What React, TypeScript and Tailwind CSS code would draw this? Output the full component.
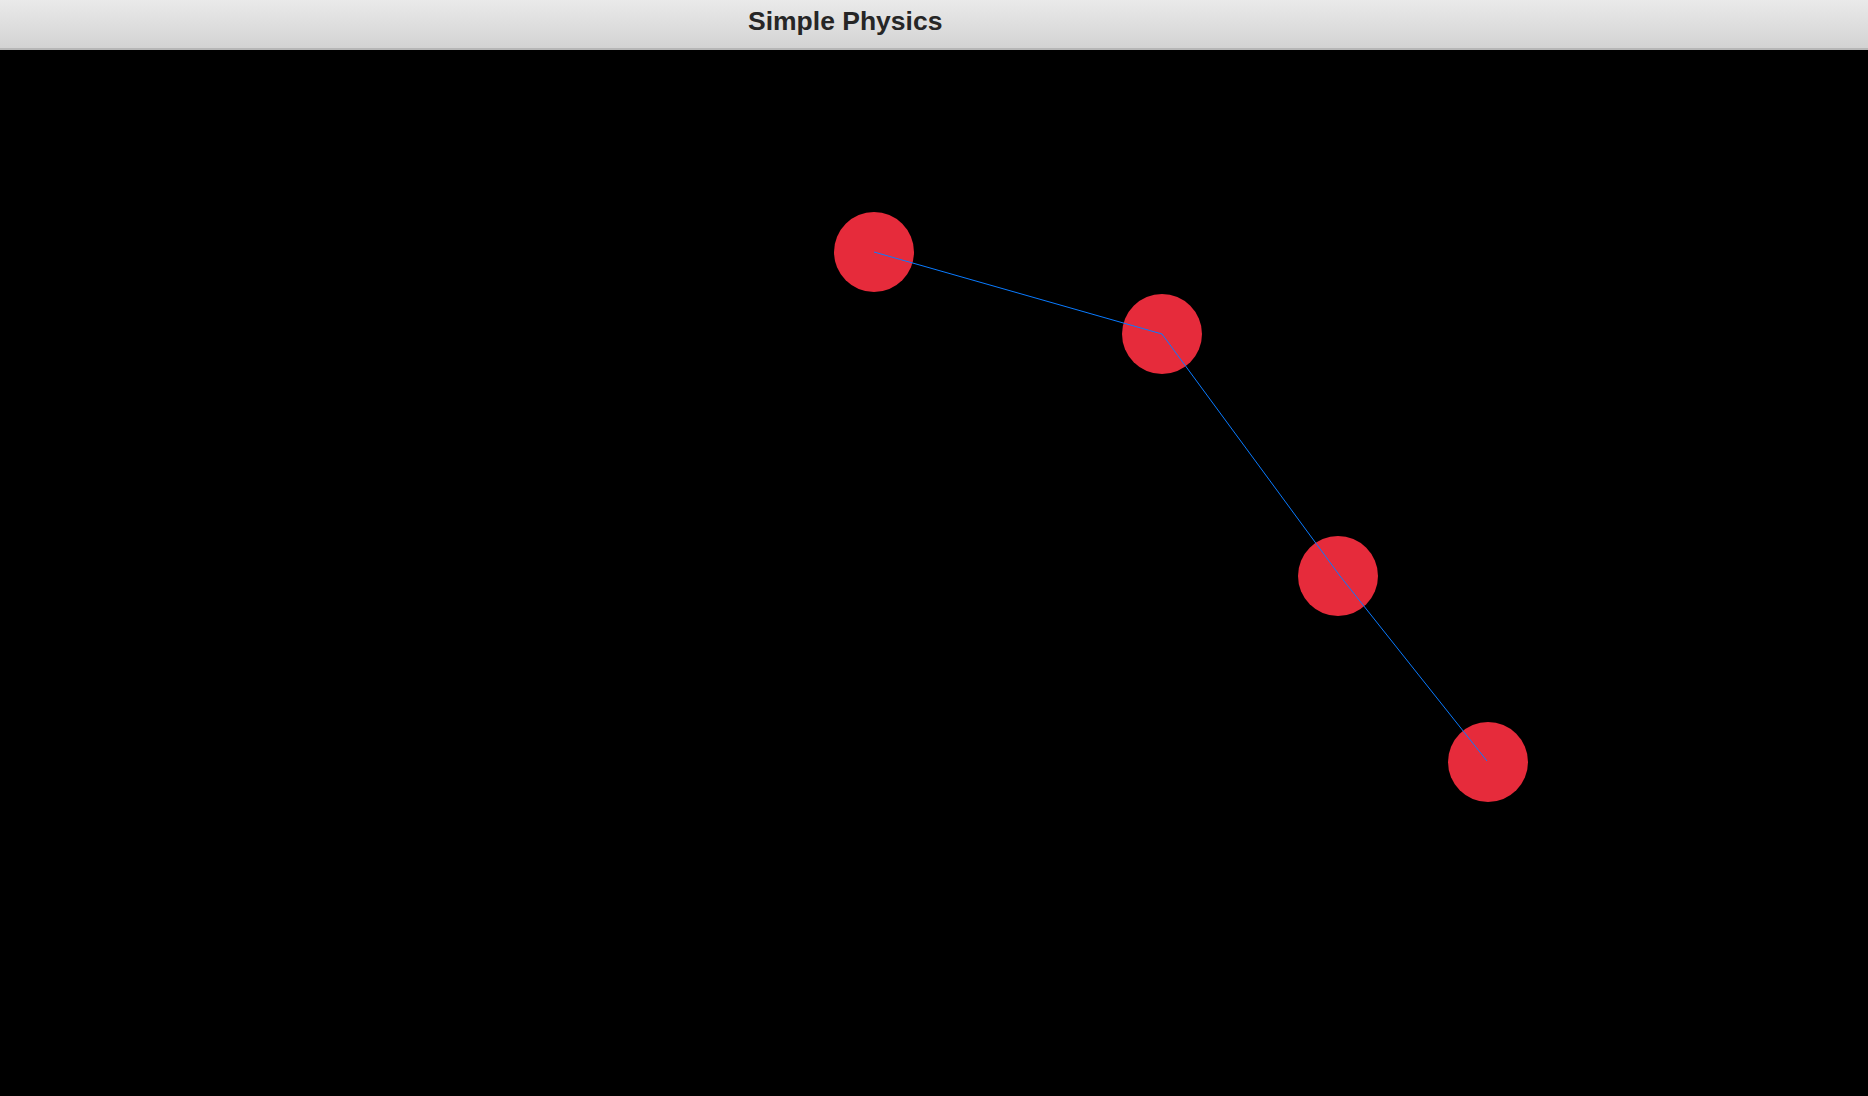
import React from 'react';

type Ball = { x: number; y: number };

// positions in page pixels; the canvas starts below the 50px title bar
const BALLS: Ball[] = [
  { x: 874, y: 252 },
  { x: 1162, y: 334 },
  { x: 1338, y: 576 },
  { x: 1488, y: 762 },
];

const LINK = [
  { x: 874, y: 252 },
  { x: 1162, y: 334 },
  { x: 1340, y: 576 },
  { x: 1487, y: 761 },
];

const TOP = 50;
const RADIUS = 40;

const App: React.FC = () => {
  return (
    <div className="flex h-screen w-full flex-col overflow-hidden bg-black font-['Liberation_Sans',Arial,sans-serif]">
      {/* Barra de título */}
      <header className="flex h-[50px] shrink-0 items-start border-b-2 border-[#b6b6b6] bg-gradient-to-b from-[#eaeaea] to-[#d3d3d3] pl-[748px]">
        <h1 className="mt-[6px] text-[26.5px] font-bold leading-[30px] text-[#262626]">Simple Physics</h1>
      </header>

      {/* Canvas */}
      <main className="relative flex-1 bg-black">
        <svg className="absolute inset-0 h-full w-full" xmlns="http://www.w3.org/2000/svg">
          {BALLS.map((b, i) => (
            <circle key={i} cx={b.x} cy={b.y - TOP} r={RADIUS} fill="#e62b3b" />
          ))}
          <polyline
            points={LINK.map((p) => `${p.x},${p.y - TOP}`).join(' ')}
            fill="none"
            stroke="#0a7bff"
            strokeWidth={1}
          />
        </svg>
      </main>
    </div>
  );
};

export default App;
